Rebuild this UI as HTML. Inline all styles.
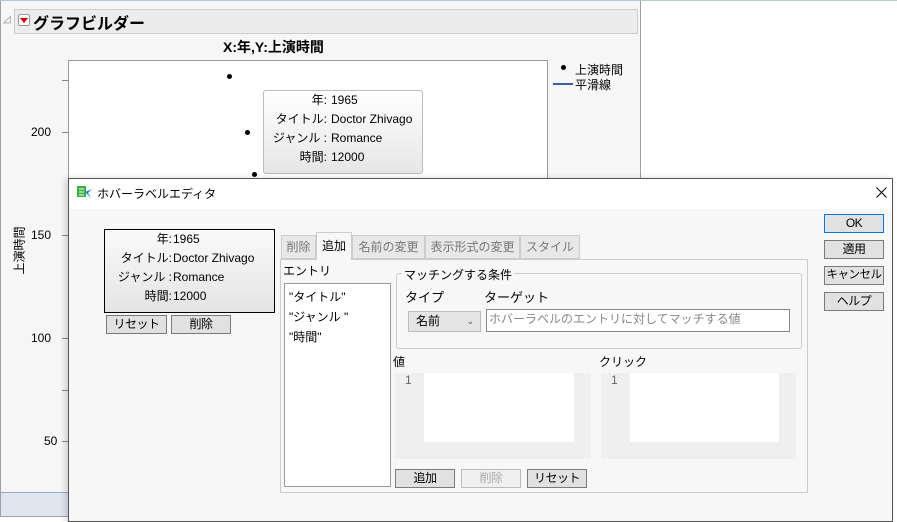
<!DOCTYPE html>
<html><head><meta charset="utf-8"><style>
*{box-sizing:border-box;margin:0;padding:0}
body{width:897px;height:522px;overflow:hidden;background:#fff;font-family:"Liberation Sans","Noto Sans CJK JP",sans-serif;font-size:12px;color:#000;position:relative}
.a{position:absolute}
.btn{position:absolute;background:#e1e1e1;border:1px solid #7a7a7a;text-align:center;font-size:12px;line-height:16px;white-space:nowrap;letter-spacing:-0.5px}
</style></head><body>
<div class="a" style="left:0;top:0;width:897px;height:1px;background:#b8c4dc"></div>
<div class="a" style="left:0;top:1px;width:641px;height:516px;background:#f6f6f6;border:1px solid #a0a0a0;border-top:none"></div>
<div class="a" style="left:1px;top:492px;width:639px;height:24px;background:#e0e6f0;border-top:1px solid #9aa8c8"></div>
<div class="a" style="left:3px;top:14px;font-size:10px;color:#888">◿</div>
<div class="a" style="left:14px;top:9px;width:624px;height:25px;background:#ececec;border:1px solid #ccc"></div>
<div class="a" style="left:18px;top:14px;width:12px;height:12px;border:1px solid #999;background:#fff;border-radius:2px"></div>
<div class="a" style="left:20px;top:18px;width:0;height:0;border-left:4px solid transparent;border-right:4px solid transparent;border-top:5px solid #d00"></div>
<div class="a" style="left:33px;top:10px;font-size:16px;font-weight:bold">グラフビルダー</div>
<div class="a" style="left:223px;top:37px;font-size:14px;font-weight:bold">X:年,Y:上演時間</div>
<div class="a" style="left:68px;top:60px;width:480px;height:130px;background:#fff;border:1px solid #999"></div>
<div class="a" style="left:31px;top:125px;font-size:12px">200</div>
<div class="a" style="left:31px;top:228px;font-size:12px">150</div>
<div class="a" style="left:31px;top:331px;font-size:12px">100</div>
<div class="a" style="left:44px;top:434px;font-size:12px">50</div>
<div class="a" style="left:62px;top:132px;width:6px;height:1px;background:#888"></div>
<div class="a" style="left:62px;top:235px;width:6px;height:1px;background:#888"></div>
<div class="a" style="left:62px;top:338px;width:6px;height:1px;background:#888"></div>
<div class="a" style="left:62px;top:441px;width:6px;height:1px;background:#888"></div>
<div class="a" style="left:62px;top:80px;width:6px;height:1px;background:#888"></div>
<div class="a" style="left:62px;top:390px;width:6px;height:1px;background:#888"></div>
<div class="a" style="left:-6px;top:242px;width:50px;text-align:center;font-size:12px;transform:rotate(-90deg)">上演時間</div>
<div class="a" style="left:227px;top:74px;width:5px;height:5px;border-radius:50%;background:#000"></div>
<div class="a" style="left:245px;top:130px;width:5px;height:5px;border-radius:50%;background:#000"></div>
<div class="a" style="left:252px;top:172px;width:5px;height:5px;border-radius:50%;background:#000"></div>
<div class="a" style="left:263px;top:90px;width:160px;height:84px;border:1px solid #bbb;border-radius:3px;background:linear-gradient(#fff,#e6e6e6);font-size:12px;line-height:19px">
<div style="position:absolute;right:95px;top:0;text-align:right;white-space:nowrap">年:<br>タイトル:<br>ジャンル :<br>時間:</div>
<div style="position:absolute;left:67px;top:0;white-space:nowrap">1965<br>Doctor Zhivago<br>Romance<br>12000</div></div>
<div class="a" style="left:561px;top:65px;width:5px;height:5px;border-radius:50%;background:#000"></div>
<div class="a" style="left:575px;top:61px;font-size:12px">上演時間</div>
<div class="a" style="left:553px;top:83px;width:20px;height:2px;background:#3c5aa8"></div>
<div class="a" style="left:575px;top:76px;font-size:12px">平滑線</div>
<!-- dialog -->
<div class="a" style="left:68px;top:178px;width:825px;height:344px;background:#f7f7f7;border:1px solid #555;box-shadow:-3px 0 6px rgba(0,0,0,.15)"></div>
<div class="a" style="left:69px;top:179px;width:823px;height:30px;background:#fff"></div>
<svg class="a" style="left:77px;top:185px" width="16" height="14"><rect x="0" y="1" width="9" height="11" fill="#3cb043"/><path d="M2 4h5M2 7h5M2 10h5" stroke="#fff"/><path d="M8 7l7-3-4 4 3 5z" fill="#1a8ad4"/></svg>
<div class="a" style="left:97px;top:185px;font-size:12px">ホバーラベルエディタ</div>
<svg class="a" style="left:876px;top:187px" width="11" height="11"><path d="M0.5 0.5L10.5 10.5M10.5 0.5L0.5 10.5" stroke="#000" stroke-width="1"/></svg>
<div class="a" style="left:104px;top:229px;width:171px;height:84px;border:1px solid #000;background:linear-gradient(#fafafa,#e4e4e4);font-size:12px;line-height:19px">
<div style="position:absolute;right:102px;top:0;text-align:right;white-space:nowrap">年:<br>タイトル:<br>ジャンル :<br>時間:</div>
<div style="position:absolute;left:68px;top:0;white-space:nowrap">1965<br>Doctor Zhivago<br>Romance<br>12000</div></div>
<div class="btn" style="left:106px;top:315px;width:61px;height:19px">リセット</div>
<div class="btn" style="left:171px;top:315px;width:60px;height:19px">削除</div>
<!-- tabs -->
<div class="a" style="left:280px;top:259px;width:528px;height:234px;border:1px solid #ccc;background:#f7f7f7"></div>
<div class="a" style="left:281px;top:235px;width:35px;height:24px;background:#e8e8e8;border:1px solid #ccc;color:#777;text-align:center;line-height:22px">削除</div>
<div class="a" style="left:316px;top:232px;width:36px;height:28px;background:#f7f7f7;border:1px solid #ccc;border-bottom:none;text-align:center;line-height:26px">追加</div>
<div class="a" style="left:352px;top:235px;width:73px;height:24px;background:#e8e8e8;border:1px solid #ccc;color:#777;text-align:center;line-height:22px">名前の変更</div>
<div class="a" style="left:425px;top:235px;width:95px;height:24px;background:#e8e8e8;border:1px solid #ccc;color:#777;text-align:center;line-height:22px">表示形式の変更</div>
<div class="a" style="left:520px;top:235px;width:60px;height:24px;background:#e8e8e8;border:1px solid #ccc;color:#777;text-align:center;line-height:22px">スタイル</div>
<div class="a" style="left:283px;top:262px">エントリ</div>
<div class="a" style="left:284px;top:283px;width:107px;height:204px;background:#fff;border:1px solid #999;padding:3px 4px;line-height:20px">"タイトル"<br>"ジャンル "<br>"時間"</div>
<div class="a" style="left:396px;top:273px;width:406px;height:76px;border:1px solid #ccc;border-radius:3px"></div>
<div class="a" style="left:402px;top:266px;background:#f7f7f7;padding:0 2px;font-size:12px">マッチングする条件</div>
<div class="a" style="left:405px;top:287px;font-size:13px">タイプ</div>
<div class="a" style="left:484px;top:287px;font-size:13px">ターゲット</div>
<div class="a" style="left:408px;top:311px;width:73px;height:21px;background:#e5e5e5;border:1px solid #bbb;padding-left:7px;line-height:19px">名前<span style="position:absolute;right:6px;font-size:9px;color:#555">⌄</span></div>
<div class="a" style="left:486px;top:309px;width:304px;height:23px;background:#fff;border:1px solid #888;color:#888;padding-left:2px;font-size:12px;line-height:19px">ホバーラベルのエントリに対してマッチする値</div>
<div class="a" style="left:393px;top:353px">値</div>
<div class="a" style="left:599px;top:353px">クリック</div>
<div class="a" style="left:395px;top:373px;width:196px;height:86px;background:#efefef"></div>
<div class="a" style="left:424px;top:373px;width:150px;height:69px;background:#fff"></div>
<div class="a" style="left:405px;top:373px;color:#666">1</div>
<div class="a" style="left:601px;top:373px;width:195px;height:86px;background:#efefef"></div>
<div class="a" style="left:630px;top:373px;width:149px;height:69px;background:#fff"></div>
<div class="a" style="left:611px;top:373px;color:#666">1</div>
<div class="btn" style="left:395px;top:469px;width:60px;height:19px">追加</div>
<div class="btn" style="left:461px;top:469px;width:60px;height:19px;background:#f0f0f0;border-color:#bbb;color:#aaa">削除</div>
<div class="btn" style="left:527px;top:469px;width:60px;height:19px">リセット</div>
<div class="btn" style="left:824px;top:214px;width:60px;height:19px;border-color:#0078d7">OK</div>
<div class="btn" style="left:824px;top:240px;width:60px;height:19px">適用</div>
<div class="btn" style="left:824px;top:266px;width:60px;height:19px;font-size:11.5px">キャンセル</div>
<div class="btn" style="left:824px;top:292px;width:60px;height:19px">ヘルプ</div>
</body></html>
